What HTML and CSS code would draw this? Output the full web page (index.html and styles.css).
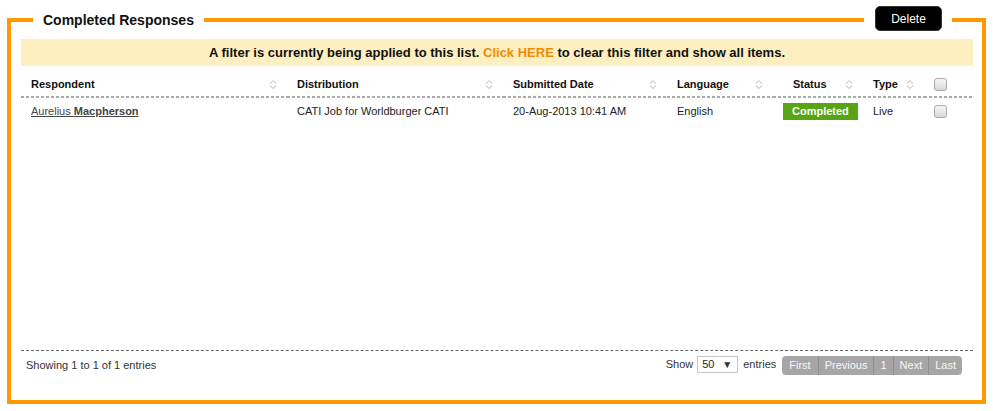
FILE: index.html
```html
<!DOCTYPE html>
<html>
<head>
<meta charset="utf-8">
<link rel="stylesheet" href="styles.css">
</head>
<body>
<div class="panel">
  <div class="panel-head">
    <h2 class="panel-title">Completed Responses</h2>
    <div class="delete-wrap"><button class="btn-delete">Delete</button></div>
  </div>
  <div class="filter-banner">A filter is currently being applied to this list. <a class="filter-link" href="#">Click HERE</a> to clear this filter and show all items.</div>
  <div class="table-scroll">
    <table class="grid">
      <colgroup>
        <col class="c-resp"><col class="c-dist"><col class="c-date"><col class="c-lang"><col class="c-status"><col class="c-type"><col class="c-check">
      </colgroup>
      <thead>
        <tr>
          <th><div class="th-in"><span>Respondent</span><svg class="sort" viewBox="0 0 8 11" width="8" height="11"><path d="M1 4.5 L4 1.5 L7 4.5 M1 6.5 L4 9.5 L7 6.5"/></svg></div></th>
          <th><div class="th-in"><span>Distribution</span><svg class="sort" viewBox="0 0 8 11" width="8" height="11"><path d="M1 4.5 L4 1.5 L7 4.5 M1 6.5 L4 9.5 L7 6.5"/></svg></div></th>
          <th><div class="th-in"><span>Submitted Date</span><svg class="sort" viewBox="0 0 8 11" width="8" height="11"><path d="M1 4.5 L4 1.5 L7 4.5 M1 6.5 L4 9.5 L7 6.5"/></svg></div></th>
          <th><div class="th-in"><span>Language</span><svg class="sort" viewBox="0 0 8 11" width="8" height="11"><path d="M1 4.5 L4 1.5 L7 4.5 M1 6.5 L4 9.5 L7 6.5"/></svg></div></th>
          <th class="th-status"><div class="th-in"><span>Status</span><svg class="sort" viewBox="0 0 8 11" width="8" height="11"><path d="M1 4.5 L4 1.5 L7 4.5 M1 6.5 L4 9.5 L7 6.5"/></svg></div></th>
          <th><div class="th-in"><span>Type</span><svg class="sort" viewBox="0 0 8 11" width="8" height="11"><path d="M1 4.5 L4 1.5 L7 4.5 M1 6.5 L4 9.5 L7 6.5"/></svg></div></th>
          <th><input class="chk" type="checkbox"></th>
        </tr>
      </thead>
      <tbody>
        <tr>
          <td><a class="resp-link" href="#">Aurelius <b>Macpherson</b></a></td>
          <td>CATI Job for Worldburger CATI</td>
          <td>20-Aug-2013 10:41 AM</td>
          <td>English</td>
          <td><span class="badge">Completed</span></td>
          <td>Live</td>
          <td><input class="chk" type="checkbox"></td>
        </tr>
      </tbody>
    </table>
  </div>
  <div class="table-foot">
    <div class="info">Showing 1 to 1 of 1 entries</div>
    <div class="foot-right">
      <div class="length">Show <span class="fake-select"><span>50</span><span class="arrow">▼</span></span> entries</div>
      <div class="pager">
        <span class="pg">First</span><span class="pg">Previous</span><span class="pg">1</span><span class="pg">Next</span><span class="pg">Last</span>
      </div>
    </div>
  </div>
</div>
</body>
</html>
```

FILE: styles.css
```css
* { box-sizing: border-box; }
html, body { margin: 0; padding: 0; background: #fff; }
body {
  font-family: "Liberation Sans", Arial, sans-serif;
  color: #222;
  width: 993px;
  height: 411px;
  overflow: hidden;
}
.panel {
  margin: 18px 0 0 7px;
  width: 979px;
  border: 4px solid #ff9900;
  padding: 0 9px 0 10px;
}
.panel-head {
  margin-top: -16px;
  display: flex;
  align-items: flex-start;
  justify-content: space-between;
  height: 25px;
}
.panel-title {
  margin: 6px 0 0 12px;
  padding: 0 10px;
  background: #fff;
  font-size: 14px;
  line-height: 16px;
  font-weight: bold;
  color: #111;
}
.delete-wrap {
  background: #fff;
  padding: 0 10px 0 11px;
  margin-right: 21px;
}
.btn-delete {
  display: block;
  width: 67px;
  height: 25px;
  border: 1px solid #333;
  border-radius: 5px;
  background: #000;
  color: #fff;
  font-family: "Liberation Sans", Arial, sans-serif;
  font-size: 12px;
  padding: 0;
}
.filter-banner {
  margin-top: 8px;
  height: 27px;
  line-height: 27px;
  background: #fdefc0;
  text-align: center;
  font-size: 13px;
  font-weight: bold;
  color: #111;
}
.filter-link { color: #f28a00; text-decoration: none; }
.table-scroll {
  margin-top: 4px;
  height: 281px;
  border-bottom: 1px dashed #666;
}
.grid {
  width: 952px;
  table-layout: fixed;
  border-collapse: collapse;
  font-size: 11px;
}
.c-resp { width: 266px; }
.c-dist { width: 216px; }
.c-date { width: 164px; }
.c-lang { width: 106px; }
.c-status { width: 90px; }
.c-type { width: 61px; }
.c-check { width: 49px; }
.grid th {
  height: 28px;
  padding: 1px 10px 1px 10px;
  text-align: left;
  font-weight: bold;
  color: #111;
  line-height: 13px;
  vertical-align: middle;
  background: repeating-linear-gradient(90deg, #a9a9a9 0 3px, transparent 3px 5px) left bottom / 100% 2px no-repeat;
}
.grid th.th-status { padding-left: 20px; }
.th-in {
  display: flex;
  align-items: center;
  justify-content: space-between;
}
.sort { fill: none; stroke: #d2d2d2; stroke-width: 1.2; }
.grid td {
  height: 25px;
  padding: 1px 10px 0 10px;
  color: #222;
  line-height: 13px;
  vertical-align: middle;
}
.resp-link { color: #444; text-decoration: underline; }
.resp-link b { font-weight: bold; }
.badge {
  display: inline-block;
  height: 17px;
  line-height: 17px;
  padding: 0 9px;
  background: #57a514;
  color: #fff;
  font-weight: bold;
}
.chk {
  -webkit-appearance: none;
  appearance: none;
  display: block;
  width: 13px;
  height: 13px;
  margin: 0;
  border: 1px solid #a9a9a9;
  border-radius: 3px;
  background: linear-gradient(#f6f6f6, #d9d9d9);
}
.table-foot {
  display: flex;
  justify-content: space-between;
  align-items: flex-start;
  padding: 5px 11px 25px 5px;
  font-size: 11px;
  color: #333;
}
.info { margin-top: 3px; line-height: 13px; }
.foot-right { display: flex; align-items: flex-start; }
.length {
  display: flex;
  align-items: center;
  gap: 4px;
  line-height: 13px;
  height: 16px;
}
.fake-select {
  display: inline-flex;
  justify-content: space-between;
  align-items: center;
  width: 41px;
  height: 17px;
  border: 1px solid #c8c8c8;
  padding: 0 5px 0 4px;
  margin-right: 1px;
  color: #222;
  background: #fff;
}
.arrow { font-size: 10px; color: #333; }
.pager {
  display: flex;
  margin-left: 6px;
  height: 19px;
  border-radius: 4px;
  overflow: hidden;
  background: #a6a6a6;
}
.pg {
  line-height: 19px;
  padding: 0 6px;
  color: #f7f7f7;
  border-left: 1px solid #8e8e8e;
}
.pg:first-child { border-left: none; padding: 0 7px; }
```
